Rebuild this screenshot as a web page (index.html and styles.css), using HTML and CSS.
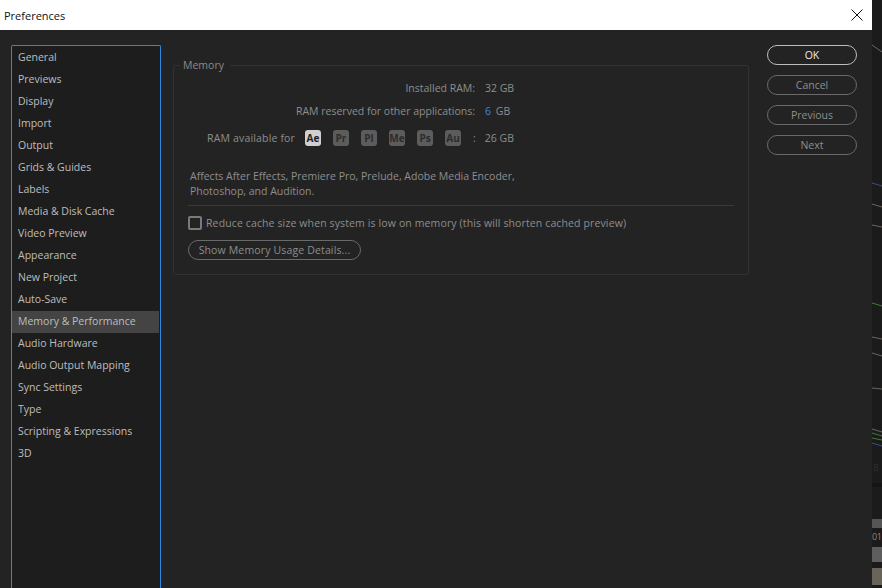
FILE: index.html
```html
<!DOCTYPE html>
<html lang="en">
<head>
<meta charset="utf-8">
<title>Preferences</title>
<link rel="stylesheet" href="styles.css">
</head>
<body>
<div class="dialog">
  <header class="titlebar">
    <span class="title">Preferences</span>
    <svg class="close" width="12" height="12" viewBox="0 0 12 12"><path d="M.5.5l11 11M11.500.5l-11 11" stroke="#111" fill="none"/></svg>
  </header>
  <div class="body">
    <nav class="nav">
      <div class="nav-item">General</div>
      <div class="nav-item">Previews</div>
      <div class="nav-item">Display</div>
      <div class="nav-item">Import</div>
      <div class="nav-item">Output</div>
      <div class="nav-item">Grids &amp; Guides</div>
      <div class="nav-item">Labels</div>
      <div class="nav-item">Media &amp; Disk Cache</div>
      <div class="nav-item">Video Preview</div>
      <div class="nav-item">Appearance</div>
      <div class="nav-item">New Project</div>
      <div class="nav-item">Auto-Save</div>
      <div class="nav-item selected">Memory &amp; Performance</div>
      <div class="nav-item">Audio Hardware</div>
      <div class="nav-item">Audio Output Mapping</div>
      <div class="nav-item">Sync Settings</div>
      <div class="nav-item">Type</div>
      <div class="nav-item">Scripting &amp; Expressions</div>
      <div class="nav-item">3D</div>
    </nav>
    <main class="main">
      <fieldset class="group">
        <legend class="legend">Memory</legend>
        <div class="row row-installed">
          <span class="label">Installed RAM:</span>
          <span class="value">32 GB</span>
        </div>
        <div class="row row-reserved">
          <span class="label">RAM reserved for other applications:</span>
          <span class="value"><span class="blue">6</span> <span class="unit">GB</span></span>
        </div>
        <div class="row row-available">
          <span class="label-plain">RAM available for</span>
          <span class="apps">
            <span class="app on">Ae</span>
            <span class="app">Pr</span>
            <span class="app">Pl</span>
            <span class="app">Me</span>
            <span class="app">Ps</span>
            <span class="app">Au</span>
          </span>
          <span class="colon">:</span>
          <span class="value">26 GB</span>
        </div>
        <p class="note">Affects After Effects, Premiere Pro, Prelude, Adobe Media Encoder,<br>Photoshop, and Audition.</p>
        <div class="rule"></div>
        <label class="check"><span class="box"></span><span>Reduce cache size when system is low on memory (this will shorten cached preview)</span></label>
        <button class="btn details">Show Memory Usage Details...</button>
      </fieldset>
    </main>
    <aside class="actions">
      <button class="btn action primary">OK</button>
      <button class="btn action">Cancel</button>
      <button class="btn action">Previous</button>
      <button class="btn action">Next</button>
    </aside>
  </div>
</div>
<div class="behind">
  <svg class="streaks" width="10" height="460" viewBox="0 0 10 460">
    <path d="M0 45l10 7M0 204l10 3M0 225l10 2M0 337l10 2M0 353l10 3M0 388l10 1M0 429l10 3" stroke="#6f6557" fill="none"/>
    <path d="M0 183l10 3M0 443l10 3" stroke="#3a4d90" fill="none"/>
    <path d="M0 303l10 3M0 433l10 3M0 438l10 2" stroke="#447a36" fill="none"/>
  </svg>
  <div class="band glyph">B</div>
  <div class="band dark"></div>
  <div class="band grey"></div>
  <div class="band num">01</div>
  <div class="band light"></div>
  <div class="band tan"></div>
</div>
</body>
</html>
```

FILE: styles.css
```css
* { box-sizing: border-box; }
html, body { margin: 0; height: 100%; }
body {
  display: flex;
  width: 882px;
  height: 588px;
  overflow: hidden;
  background: #1b1b1b;
  font-family: "Open Sans", "Noto Sans", sans-serif;
  font-size: 10.5px;
}
.dialog {
  width: 872px;
  height: 588px;
  display: flex;
  flex-direction: column;
  background: #232323;
}
.titlebar {
  height: 30px;
  flex: none;
  background: #fff;
  display: flex;
  align-items: center;
  justify-content: space-between;
  padding: 0 9px 0 4px;
}
.title { font-size: 11px; color: #111; }
.close { display: block; margin-bottom: 1px; }
.body {
  flex: 1;
  display: flex;
  padding: 15px 15px 0 11px;
  min-height: 0;
}
.nav {
  width: 150px;
  flex: none;
  background: #1d1d1d;
  border: 1px solid #2d87e0;
  border-bottom: 0;
  border-radius: 2px 2px 0 0;
  padding-top: 1px;
  margin-bottom: -1px;
}
.nav-item {
  height: 22px;
  line-height: 20px;
  padding-left: 6px;
  margin-right: 1px;
  color: #bdbdbd;
}
.selected { background: #444; color: #bdbdbd; }
.main { flex: 1; padding: 14px 18px 0 12px; min-width: 0; }
.group {
  margin: 0;
  height: 216px;
  border: 1px solid #323232;
  border-radius: 3px;
  padding: 0 14px;
  color: #8e8e8e;
}
.legend { padding: 0 6px 0 3px; margin-left: -8px; color: #8a8a8a; line-height: 13px; }
.row { display: flex; align-items: center; height: 16px; }
.row-installed { margin-top: 8px; }
.row-reserved { margin-top: 7px; }
.row-available { margin-top: 10px; height: 18px; }
.label { width: 287px; text-align: right; flex: none; }
.label-plain { margin-left: 19px; width: 98px; flex: none; letter-spacing: .17px; }
.value { margin-left: 10px; }
.blue { color: #3d85d6; }
.unit { margin-left: 2px; }
.apps { display: flex; gap: 12px; }
.app {
  width: 16px;
  height: 16px;
  border-radius: 3px;
  background: #5c5c5c;
  color: #2c2c2c;
  font-size: 10px;
  font-weight: 700;
  line-height: 16px;
  text-align: center;
}
.app.on { background: #d0d0d0; color: #232323; }
.colon { margin-left: 12px; margin-right: -1px; }
.note { margin: 22px 0 0 2px; line-height: 15px; color: #8e8e8e; }
.rule { height: 1px; background: #3a3a3a; margin-top: 6px; }
.check { display: flex; align-items: center; gap: 4px; margin-top: 9px; height: 16px; letter-spacing: .125px; }
.box {
  width: 14px;
  height: 14px;
  border: 2px solid #7a7a7a;
  border-radius: 2px;
  flex: none;
}
.btn {
  display: block;
  font: inherit;
  background: transparent;
  border: 1px solid #6a6a6a;
  border-radius: 10px;
  color: #8e8e8e;
  height: 20px;
  padding: 0;
  text-align: center;
}
.details { width: 173px; margin-top: 9px; letter-spacing: .15px; }
.actions { width: 90px; flex: none; display: flex; flex-direction: column; gap: 10px; }
.action { width: 90px; }
.primary { border-color: #bdbdbd; color: #ececec; }
.behind { width: 10px; height: 588px; flex: none; display: flex; flex-direction: column; background: #1b1b1b; }
.streaks { display: block; flex: none; }
.band { flex: none; width: 10px; }
.glyph { height: 23px; font-size: 9px; line-height: 16px; color: #2e2e2e; padding-left: 1px; }
.dark { height: 4px; background: #141414; margin-bottom: 32px; }
.grey { height: 9px; background: #555; }
.num { height: 18px; line-height: 18px; font-size: 9px; letter-spacing: -.5px; color: #8f8672; white-space: nowrap; }
.light { height: 15px; background: #5e5e5e; margin-top: 1px; margin-bottom: 6px; }
.tan { height: 17px; background: #69645a; }
```
